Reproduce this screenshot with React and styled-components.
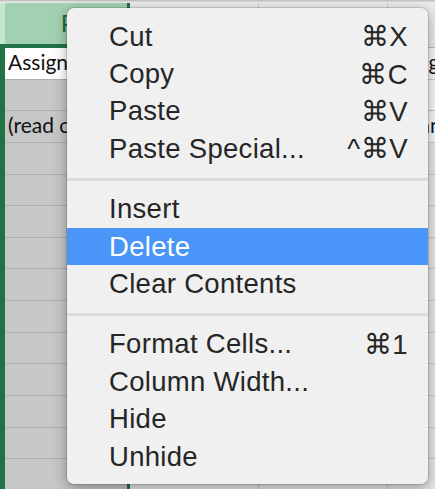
import React from "react";
import styled, { createGlobalStyle } from "styled-components";

const GlobalStyle = createGlobalStyle`
  html, body {
    margin: 0;
    padding: 0;
    background: #e8e8e8;
    overflow: hidden;
  }
`;

const columns = [
  { width: 125, selected: true },
  { width: 129 },
  { width: 129 },
  { width: 129 },
];

const rows = [
  ["Assign", "", "", "Assignment"],
  ["", "", "", ""],
  ["(read only)", "", "", "Finance"],
  ["", "", "", ""],
  ["", "", "", ""],
  ["", "", "", ""],
  ["", "", "", ""],
  ["", "", "", ""],
  ["", "", "", ""],
  ["", "", "", ""],
  ["", "", "", ""],
  ["", "", "", ""],
  ["", "", "", ""],
  ["", "", "", ""],
];

const menu = [
  [
    { label: "Cut", key: "⌘X" },
    { label: "Copy", key: "⌘C" },
    { label: "Paste", key: "⌘V" },
    { label: "Paste Special...", key: "^⌘V" },
  ],
  [
    { label: "Insert" },
    { label: "Delete", active: true },
    { label: "Clear Contents" },
  ],
  [
    { label: "Format Cells...", key: "⌘1" },
    { label: "Column Width..." },
    { label: "Hide" },
    { label: "Unhide" },
  ],
];

const App = () => {
  return (
    <>
      <GlobalStyle />
      <Sheet>
        <TopEdge />
        <HeaderRow>
          <LeftEdge $header />
          {columns.map((col, i) => (
            <HeaderCell key={i} $width={col.width} $selected={col.selected}>
              {col.selected ? "P" : ""}
            </HeaderCell>
          ))}
        </HeaderRow>
        {rows.map((row, r) => (
          <Row key={r}>
            <LeftEdge />
            {columns.map((col, c) => (
              <Cell
                key={c}
                $width={col.width}
                $selected={col.selected}
                $active={col.selected && r === 0}
                $plain={!col.selected && r < 3}
              >
                {row[c]}
              </Cell>
            ))}
          </Row>
        ))}

        <Menu>
          {menu.map((group, g) => (
            <React.Fragment key={g}>
              {g > 0 && <Separator />}
              {group.map((item) => (
                <MenuItem key={item.label} $active={item.active}>
                  <span>{item.label}</span>
                  {item.key && <Shortcut>{item.key}</Shortcut>}
                </MenuItem>
              ))}
            </React.Fragment>
          ))}
        </Menu>
      </Sheet>
    </>
  );
};

const Sheet = styled.div`
  position: relative;
  width: 435px;
  height: 489px;
  overflow: hidden;
  display: flex;
  flex-direction: column;
  background: #e8e8e8;
  font-family: Lato, "Liberation Sans", sans-serif;
`;

const TopEdge = styled.div`
  height: 3px;
  flex: none;
  background: linear-gradient(#b9b9b9, #f4f4f4);
`;

const HeaderRow = styled.div`
  display: flex;
  flex: none;
  height: 45px;
`;

const LeftEdge = styled.div`
  width: 5px;
  flex: none;
  background: ${(p) => (p.$header ? "#c3e6cd" : "#217346")};
  border-bottom: ${(p) => (p.$header ? "4px solid #217346" : "none")};
  box-sizing: border-box;
`;

const HeaderCell = styled.div`
  width: ${(p) => p.$width}px;
  flex: none;
  box-sizing: border-box;
  display: flex;
  align-items: center;
  justify-content: center;
  padding: 0 0 2px 4px;
  font-size: 24px;
  color: #1d6a39;
  background: ${(p) => (p.$selected ? "#a2d1b2" : "#e9e9e9")};
  border-bottom: ${(p) =>
    p.$selected ? "4px solid #217346" : "1px solid #bdbdbd"};
  border-right: ${(p) =>
    p.$selected ? "3px solid #217346" : "1px solid #c9c9c9"};
`;

const Row = styled.div`
  display: flex;
  flex: none;
  height: 31.65px;
`;

const Cell = styled.div`
  width: ${(p) => p.$width}px;
  flex: none;
  box-sizing: border-box;
  display: flex;
  align-items: flex-end;
  padding: 0 0 5px 3px;
  white-space: nowrap;
  overflow: hidden;
  font-size: 21px;
  color: #111;
  background: ${(p) =>
    p.$active ? "#ffffff" : p.$selected ? "#c7c7c7" : p.$plain ? "#f7f7f7" : "#e6e6e6"};
  border-bottom: 1px solid ${(p) => (p.$selected ? "#adadad" : "#c8c8c8")};
  border-right: ${(p) =>
    p.$selected ? "3px solid #217346" : "1px solid #c4c4c4"};
`;

const Menu = styled.div`
  position: absolute;
  left: 67px;
  top: 8px;
  width: 361px;
  box-sizing: border-box;
  padding: 10px 0 9px;
  border-radius: 7px;
  background: #f0f0f0;
  box-shadow: 0 0 0 1px rgba(0, 0, 0, 0.12), 0 4px 14px rgba(0, 0, 0, 0.35);
  font-family: "Liberation Sans", Arial, sans-serif;
`;

const MenuItem = styled.div`
  height: 37.4px;
  display: flex;
  align-items: center;
  justify-content: space-between;
  padding: 0 20px 0 42px;
  font-size: 27.5px;
  letter-spacing: 0.3px;
  color: ${(p) => (p.$active ? "#ffffff" : "#262626")};
  background: ${(p) => (p.$active ? "#4a96f8" : "transparent")};
`;

const Shortcut = styled.span`
  letter-spacing: 0.5px;
`;

const Separator = styled.div`
  height: 3px;
  margin: 10px 0;
  background: #dcdcdc;
`;

export default App;
